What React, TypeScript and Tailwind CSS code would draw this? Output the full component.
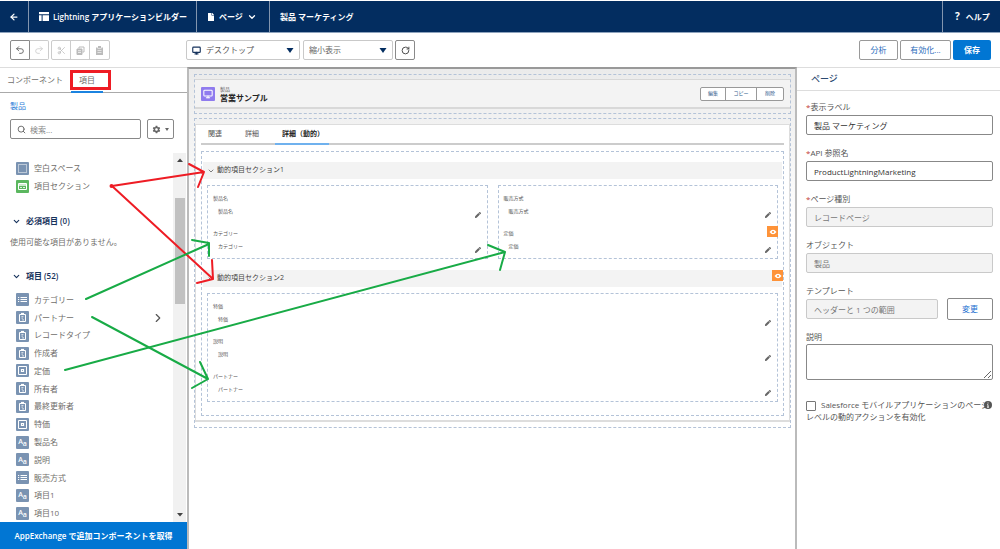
import type { ReactNode } from 'react';
import {
  ArrowLeft,
  ChevronDown,
  ChevronRight,
  Monitor,
  Redo2,
  RotateCw,
  Scissors,
  Search,
  Undo2,
} from 'lucide-react';
import { FaFile, FaPen } from 'react-icons/fa';
import { IoMdSettings } from 'react-icons/io';

type FieldKind = 'list' | 'lookup' | 'currency' | 'text' | 'space' | 'section';

const fields: { name: string; kind: FieldKind }[] = [
  { name: 'カテゴリー', kind: 'list' },
  { name: 'パートナー', kind: 'lookup' },
  { name: 'レコードタイプ', kind: 'lookup' },
  { name: '作成者', kind: 'lookup' },
  { name: '定価', kind: 'currency' },
  { name: '所有者', kind: 'lookup' },
  { name: '最終更新者', kind: 'lookup' },
  { name: '特価', kind: 'currency' },
  { name: '製品名', kind: 'text' },
  { name: '説明', kind: 'text' },
  { name: '販売方式', kind: 'list' },
  { name: '項目1', kind: 'text' },
  { name: '項目10', kind: 'text' },
];

function FieldIcon({ kind }: { kind: FieldKind }) {
  const bg = kind === 'section' ? 'bg-[#5bb75f]' : 'bg-[#7a93b2]';
  return (
    <span className={`flex size-[13px] shrink-0 items-center justify-center rounded-[1px] text-white ${bg}`}>
      {kind === 'text' ? (
        <span className="flex items-end leading-none font-semibold">
          <span className="text-[7px] leading-[10px]">A</span>
          <span className="text-[7px] leading-[6px]">a</span>
        </span>
      ) : (
        <svg viewBox="0 0 13 13" className="size-[13px]" fill="none" stroke="currentColor" strokeWidth="1">
          {kind === 'list' && (
            <path d="M2 4.5h1.200M4.500 4.5h6.500M2 6.5h1.200M4.500 6.5h6.500M2 8.5h1.200M4.500 8.5h6.500" />
          )}
          {kind === 'lookup' && (
            <>
              <path d="M3.5 3.500h6v7h-6z" />
              <path d="M5 2.700h3" strokeWidth="1.6" />
              <path d="M5.400 5.700h2M5.600 7.200h1.200M6.200 8.900h1.800" strokeWidth="0.8" />
            </>
          )}
          {kind === 'currency' && (
            <>
              <path d="M2.5 2.500h8v8h-8z" />
              <path d="M5.500 5.500h2v2h-2z" strokeWidth="1.2" />
            </>
          )}
          {kind === 'space' && <path d="M2.5 2.5h8v8h-8z" strokeDasharray="1 1" />}
          {kind === 'section' && (
            <>
              <path d="M2.5 3.5h8v6h-8z" />
              <path d="M2.5 5h8" strokeWidth="1.4" />
              <path d="M4 7.5h2M7 7.5h2" strokeWidth="0.8" />
            </>
          )}
        </svg>
      )}
    </span>
  );
}

function Header() {
  return (
    <header className="flex h-[33px] shrink-0 items-stretch border-y border-[#8ea3bd] border-t-white bg-[#032d60] text-[8px] font-semibold text-white">
      <a href="#back" aria-label="戻る" className="flex w-[29px] items-center justify-center border-r border-[#8395ae]">
        <ArrowLeft size={10} strokeWidth={3} />
      </a>
      <div className="flex w-[168px] items-center gap-1 border-r border-[#8395ae] pl-[10px] whitespace-nowrap">
        <svg viewBox="0 0 10 9" className="h-[9px] w-[10px]" fill="currentColor">
          <path d="M0 0h10v2.200H0zM0 3.200h2.600V9H0zM3.600 3.200H10V9H3.600z" />
        </svg>
        Lightning アプリケーションビルダー
      </div>
      <button type="button" className="flex w-[73px] items-center gap-1 border-r border-[#8395ae] pl-[10px] whitespace-nowrap">
        <FaFile size={8} />
        ページ
        <ChevronDown size={10} strokeWidth={3} />
      </button>
      <h1 className="flex items-center pl-[10px]">製品 マーケティング</h1>
      <a href="#help" className="ml-auto flex w-[58px] items-center gap-[6px] border-l border-[#8395ae] pl-3">
        <span className="text-[10px] font-bold">?</span>
        ヘルプ
      </a>
    </header>
  );
}

function Toolbar() {
  return (
    <div className="flex h-[34px] shrink-0 items-center pl-[10px] pr-[9px] text-[8px]">
      <div className="flex w-[176px] gap-[2px]">
        <div className="flex h-5">
          <button type="button" aria-label="元に戻す" className="flex w-5 items-center justify-center rounded-l-[2px] border border-[#8a8a8a] text-[#555]">
            <Undo2 size={10} />
          </button>
          <button type="button" aria-label="やり直し" className="flex w-[19px] items-center justify-center rounded-r-[2px] border border-l-0 border-[#ccc] text-[#ccc]">
            <Redo2 size={10} />
          </button>
        </div>
        <div className="flex h-5 divide-x divide-[#ccc] rounded-[2px] border border-[#ccc] text-[#bbb]">
          <button type="button" aria-label="切り取り" className="flex w-[19px] items-center justify-center">
            <Scissors size={9} />
          </button>
          <button type="button" aria-label="コピー" className="flex w-[19px] items-center justify-center">
            <svg viewBox="0 0 9 9" className="size-[9px]" fill="none" stroke="currentColor">
              <path d="M3 2.500V1h5v5H6.500" />
              <path d="M1 3h5v5.500H1z" fill="currentColor" />
              <path d="M2 4.700h3M2 6.500h3" stroke="#fff" strokeWidth="0.7" />
            </svg>
          </button>
          <button type="button" aria-label="貼り付け" className="flex w-[19px] items-center justify-center">
            <svg viewBox="0 0 9 9" className="size-[9px]" fill="currentColor">
              <path d="M1 1.500h1.500v1h4v-1H8V9H1zM3 0h3v2H3z" />
              <path d="M2.500 4.500h4M2.500 6.500h4" stroke="#fff" strokeWidth="0.6" />
            </svg>
          </button>
        </div>
      </div>
      <div className="flex gap-[3px]">
        <div className="relative flex h-5 w-[114px] items-center">
          <Monitor size={9} strokeWidth={3} className="pointer-events-none absolute left-[6px] text-[#16325c]" />
          <select aria-label="デバイス" className="h-5 w-full appearance-none rounded-[2px] border border-[#c9c9c9] pl-[19px] text-[#555]">
            <option>デスクトップ</option>
          </select>
          <Caret />
        </div>
        <div className="relative flex h-5 w-[90px] items-center">
          <select aria-label="表示倍率" className="h-5 w-full appearance-none rounded-[2px] border border-[#c9c9c9] pl-[5px] text-[#666]">
            <option>縮小表示</option>
          </select>
          <Caret />
        </div>
        <button type="button" aria-label="更新" className="-ml-px flex size-5 items-center justify-center rounded-[2px] border border-[#8a8a8a] text-[#444]">
          <RotateCw size={9} strokeWidth={2.5} />
        </button>
      </div>
      <div className="ml-auto flex h-5 gap-[2px] text-[#2a6dbb]">
        <button type="button" className="w-[39px] rounded-[2px] border border-[#999]">分析</button>
        <button type="button" className="w-[51px] rounded-[2px] border border-[#999]">有効化...</button>
        <button type="button" className="w-[38px] rounded-[2px] bg-[#0176d3] font-bold text-white">保存</button>
      </div>
    </div>
  );
}

function Caret() {
  return (
    <svg viewBox="0 0 8 5" className="pointer-events-none absolute right-[6px] h-[5px] w-2" fill="#032d60">
      <path d="M0.5 0h7L4 5z" />
    </svg>
  );
}

function GroupTitle({ children }: { children: ReactNode }) {
  return (
    <h2 className="flex h-3 items-center gap-[5px] pl-3 font-semibold text-[#16325c]">
      <ChevronDown size={9} strokeWidth={3} />
      {children}
    </h2>
  );
}

function Palette() {
  return (
    <aside className="flex w-[187px] shrink-0 flex-col border-t border-[#ddd] text-[8px] text-[#706e6b]">
      <nav className="flex h-[25px] shrink-0 items-stretch border-b border-[#aaa] pl-[7px]">
        <a href="#components" className="flex items-center">コンポーネント</a>
        <a href="#fields" className="-mb-px ml-2 flex w-8 items-center justify-center border-b-2 border-[#1b83e0]">
          項目
        </a>
      </nav>
      <a href="#product" className="mt-2 ml-[10px] leading-[10px] text-[#2f80d8]">製品</a>
      <div className="mt-2 flex h-5 gap-[6px] px-[10px]">
        <div className="relative flex w-[131px] items-center">
          <Search size={9} strokeWidth={2.5} className="absolute left-[7px] text-[#666]" />
          <input
            type="search"
            aria-label="検索"
            placeholder="検索..."
            className="h-5 w-full rounded-[2px] border border-[#888] pl-[19px] placeholder:text-[#888]"
          />
        </div>
        <button type="button" aria-label="設定" className="flex w-[27px] items-center justify-center gap-1 rounded-[2px] border border-[#888] text-[#666]">
          <IoMdSettings size={9} />
          <svg viewBox="0 0 4 3" className="h-[3px] w-1" fill="currentColor">
            <path d="M0 0h4L2 3z" />
          </svg>
        </button>
      </div>
      <div className="mt-[14px] flex min-h-0 flex-1">
        <div className="flex flex-1 flex-col pt-[6px]">
          <ul>
            <li className="flex h-[18px] items-center gap-[5px] pl-4">
              <FieldIcon kind="space" />
              空白スペース
            </li>
            <li className="flex h-[18px] items-center gap-[5px] pl-4">
              <FieldIcon kind="section" />
              項目セクション
            </li>
          </ul>
          <div className="mt-5">
            <GroupTitle>必須項目 (0)</GroupTitle>
          </div>
          <p className="mt-[10px] pl-[10px] leading-[10px] whitespace-nowrap">使用可能な項目がありません。</p>
          <div className="mt-[23px]">
            <GroupTitle>項目 (52)</GroupTitle>
          </div>
          <ul className="mt-[9px] flex min-h-0 flex-1 flex-col">
            {fields.map((f) => (
              <li key={f.name} className="flex min-h-0 flex-1 items-center gap-[5px] pl-4">
                <FieldIcon kind={f.kind} />
                {f.name}
                {f.name === 'パートナー' && (
                  <ChevronRight size={14} className="mr-2 ml-auto text-[#555]" />
                )}
              </li>
            ))}
          </ul>
        </div>
        <div className="flex w-[13px] flex-col items-center bg-[#f1f1f1] py-[5px]">
          <svg viewBox="0 0 6 4" className="h-1 w-[6px]" fill="#444">
            <path d="M0 4h6L3 0.5z" />
          </svg>
          <div className="mt-9 h-[106px] w-[10px] bg-[#c1c1c1]" />
          <svg viewBox="0 0 6 4" className="mt-auto h-1 w-[6px]" fill="#444">
            <path d="M0 0h6L3 3.5z" />
          </svg>
        </div>
        <div className="w-px" />
      </div>
      <button type="button" className="h-[27px] shrink-0 bg-[#0176d3] font-semibold text-white">
        AppExchange で追加コンポーネントを取得
      </button>
    </aside>
  );
}

function VisibilityBadge({ className }: { className: string }) {
  return (
    <span className={`absolute flex size-[11px] items-center justify-center bg-[#fe9339] ${className}`}>
      <svg viewBox="0 0 8 6" className="h-[6px] w-2">
        <path d="M0.5 3Q4-1.6 7.5 3Q4 7.6 0.5 3z" fill="#fff" />
        <circle cx="4" cy="3" r="1.1" fill="#fe9339" />
      </svg>
    </span>
  );
}

function Field({ name, badge }: { name: string; badge?: boolean }) {
  return (
    <div className="relative">
      <div className="h-3 leading-3">{name}</div>
      <div className="flex h-[14px] items-end justify-between pl-[5px]">
        <span className="leading-[14px]">{name}</span>
        <FaPen size={6} className="text-[#666]" />
      </div>
      {badge && <VisibilityBadge className="-top-px -right-[7px]" />}
    </div>
  );
}

function FieldBox({ names, badgeOn }: { names: string[]; badgeOn?: string }) {
  return (
    <div className="flex flex-1 flex-col gap-[9px] border border-dashed border-[#b4c3d8] pt-[6px] pr-[6px] pb-[5px] pl-[5px] text-[5px] text-[#555]">
      {names.map((n) => (
        <Field key={n} name={n} badge={n === badgeOn} />
      ))}
    </div>
  );
}

function SectionBar({ title, badge }: { title: string; badge?: boolean }) {
  return (
    <div className="relative mx-px flex h-[17px] items-center gap-[2px] bg-[#f3f3f3] pl-1 text-[7px] text-[#444]">
      <ChevronDown size={8} />
      {title}
      {badge && <VisibilityBadge className="top-0 -right-px" />}
    </div>
  );
}

function Canvas() {
  return (
    <main className="min-w-0 flex-1 border-2 border-b-0 border-[#bbb] border-t-[#999] bg-linear-to-b from-[#ebebeb] to-white to-[160px] pt-[5px] pr-1 pl-[5px]">
      <div className="border border-dashed border-[#b4c3d8] py-1">
        <div className="flex h-[30px] items-center border-t border-b-2 border-[#d8d8d8] bg-[#f3f3f3] px-[6px]">
          <span className="flex size-[14px] items-center justify-center rounded-[1px] bg-[#8f7bee] text-white">
            <Monitor size={10} strokeWidth={2.5} />
          </span>
          <div className="ml-[5px]">
            <div className="text-[5px] leading-[7px] text-[#555]">製品</div>
            <div className="text-[8px] leading-[9px] font-semibold text-[#222]">営業サンプル</div>
          </div>
          <div className="ml-auto flex h-[14px] divide-x divide-[#999] rounded-[2px] border border-[#999] bg-white text-[5px] text-[#35618e]">
            <button type="button" className="w-[25px]">編集</button>
            <button type="button" className="w-[31px]">コピー</button>
            <button type="button" className="w-[26px]">削除</button>
          </div>
        </div>
      </div>

      <div className="mt-1 border border-dashed border-[#b4c3d8] py-[5px]">
        <div className="border border-b-2 border-[#ddd] bg-white px-[5px] pb-1">
          <nav className="flex h-5 items-stretch border-b-2 border-[#ccc] text-[7px] text-[#555]">
            <a href="#related" className="flex w-[37px] items-center pl-[7px]">関連</a>
            <a href="#details" className="flex w-[37px] items-center pl-[7px]">詳細</a>
            <a href="#dynamic" className="-mb-[2px] flex w-[54px] items-center border-b-2 border-[#6fb1ee] pl-[7px] font-semibold whitespace-nowrap text-[#222]">
              詳細（動的）
            </a>
          </nav>
          <div className="mt-[6px] border border-dashed border-[#b4c3d8] pt-[10px] pb-[13px]">
            <SectionBar title="動的項目セクション1" />
            <div className="mt-[6px] flex gap-[10px] px-[5px]">
              <FieldBox names={['製品名', 'カテゴリー']} />
              <FieldBox names={['販売方式', '定価']} badgeOn="定価" />
            </div>
            <div className="mt-[11px]">
              <SectionBar title="動的項目セクション2" badge />
            </div>
            <div className="mt-[6px] flex px-[5px]">
              <FieldBox names={['特価', '説明', 'パートナー']} />
            </div>
          </div>
        </div>
      </div>
    </main>
  );
}

function TextField({
  id,
  label,
  value,
  required,
  disabled,
  action,
}: {
  id: string;
  label: string;
  value: string;
  required?: boolean;
  disabled?: boolean;
  action?: ReactNode;
}) {
  return (
    <div className="flex flex-col gap-[3px]">
      <label htmlFor={id} className="leading-[10px]">
        {required && <span className="text-[#c23934]">*</span>}
        {label}
      </label>
      <div className="flex items-center gap-[9px]">
        <input
          id={id}
          defaultValue={value}
          disabled={disabled}
          className="h-5 min-w-0 flex-1 rounded-[2px] border border-[#888] bg-white px-[7px] text-[#333] disabled:border-[#c9c9c9] disabled:bg-[#f3f3f3] disabled:text-[#777]"
        />
        {action}
      </div>
    </div>
  );
}

function Properties() {
  return (
    <aside className="w-[203px] shrink-0 border-t border-[#ddd] text-[8px] text-[#555]">
      <h2 className="flex h-[23px] items-center border-b border-[#ddd] pl-[14px] text-[9px] font-medium text-[#2b4a70]">ページ</h2>
      <form className="flex flex-col gap-[13px] pt-[11px] pr-[7px] pl-[9px]">
        <TextField id="label" label="表示ラベル" value="製品 マーケティング" required />
        <TextField id="api" label="API 参照名" value="ProductLightningMarketing" required />
        <TextField id="type" label="ページ種別" value="レコードページ" required disabled />
        <TextField id="object" label="オブジェクト" value="製品" disabled />
        <TextField
          id="template"
          label="テンプレート"
          value="ヘッダーと 1 つの範囲"
          disabled
          action={
            <button type="button" className="-my-px h-[22px] w-[46px] rounded-[2px] border border-[#888] text-[#1b6fd0]">
              変更
            </button>
          }
        />
        <div className="flex flex-col gap-[2px]">
          <label htmlFor="description" className="leading-[10px]">説明</label>
          <textarea id="description" className="block h-9 w-full rounded-[2px] border border-[#888]" />
        </div>
        <div className="relative mt-[6px]">
          <label className="block leading-3 whitespace-nowrap">
            <input
              type="checkbox"
              className="mr-[5px] size-[10px] appearance-none rounded-[1px] border border-[#777] align-middle"
            />
            Salesforce モバイルアプリケーションのページ
            <br />
            レベルの動的アクションを有効化
          </label>
          <svg viewBox="0 0 8 8" className="absolute top-[2px] right-px size-2">
            <circle cx="4" cy="4" r="4" fill="#555" />
            <path d="M4 1.5v1M3.3 3.6H4v2.6M3 6.2h2" stroke="#fff" strokeWidth="0.9" fill="none" />
          </svg>
        </div>
      </form>
    </aside>
  );
}

// Hand-drawn arrows from the palette items to where they land on the page
function Annotations() {
  return (
    <svg className="pointer-events-none absolute inset-0 h-full w-full" fill="none" strokeWidth="2" strokeLinecap="round" strokeLinejoin="round">
      <g stroke="#ee1c24">
        <rect x="71.5" y="71.5" width="38" height="17" strokeWidth="3" strokeLinejoin="miter" />
        <path d="M112 186L204 172M189 164L204 172L198 187" />
        <path d="M112 186L213 279M212 260L213 279L197 283" />
        <circle cx="111.5" cy="186" r="1" fill="#ee1c24" />
      </g>
      <g stroke="#18ab46">
        <path d="M86 299L209 244M192 240L209 243L209 256" />
        <path d="M92 317L208 379M200 362L208 379L192 388" />
        <path d="M65 370L505 252M488 245L505 252L500 270" />
      </g>
    </svg>
  );
}

export default function App() {
  return (
    <div className="relative flex h-screen flex-col overflow-hidden bg-white font-['Open_Sans','Noto_Sans_CJK_JP',sans-serif]">
      <Header />
      <Toolbar />
      <div className="flex min-h-0 flex-1">
        <Palette />
        <Canvas />
        <Properties />
      </div>
      <Annotations />
    </div>
  );
}
